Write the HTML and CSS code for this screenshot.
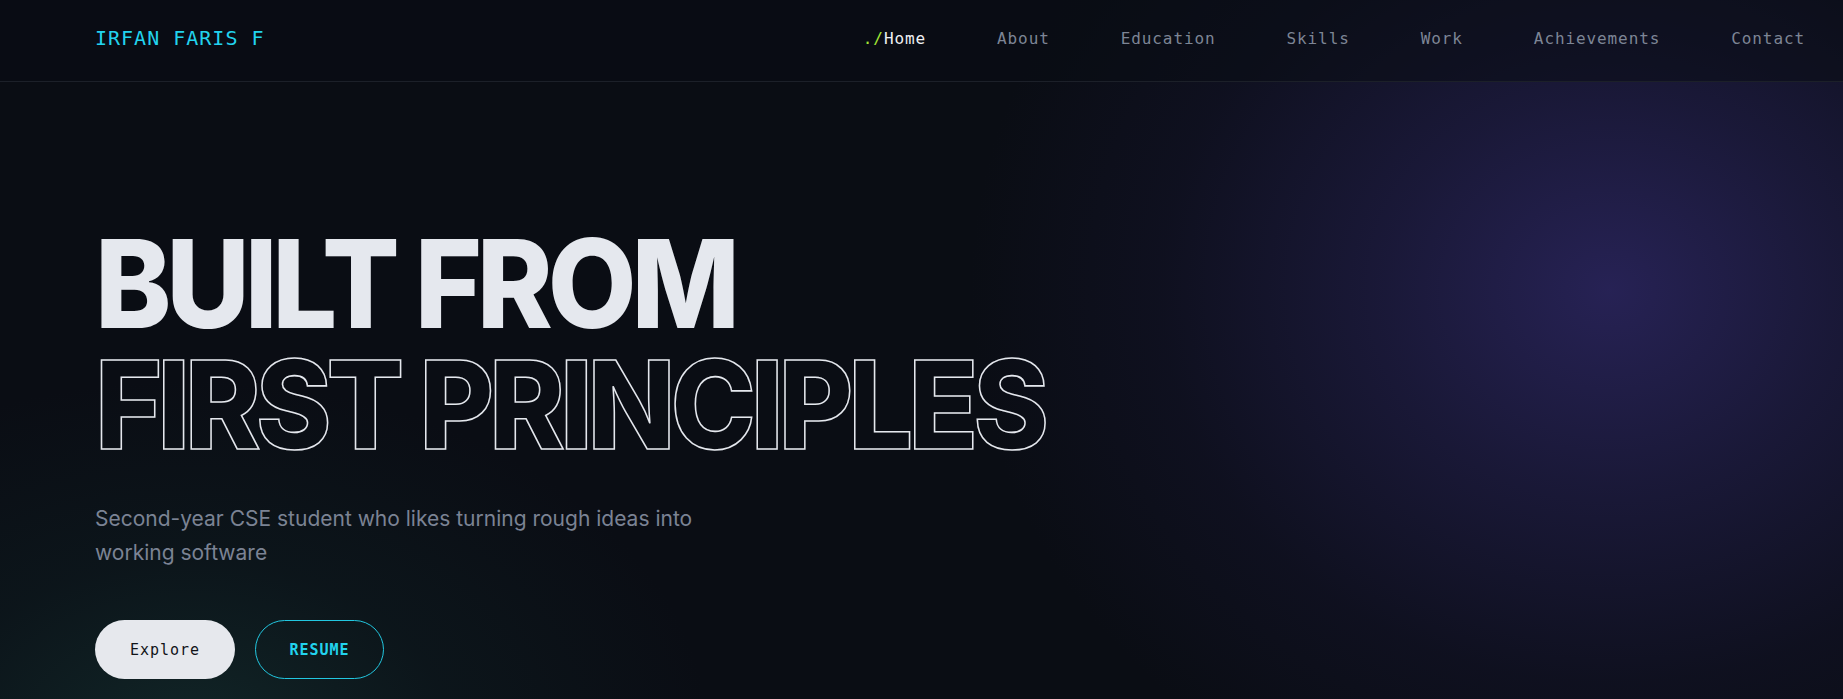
FILE: index.html
```html
<!DOCTYPE html>
<html lang="en">
<head>
<meta charset="utf-8">
<title>Irfan Faris F</title>
<link rel="stylesheet" href="styles.css">
</head>
<body>
<div class="page">
  <header class="nav">
    <a class="logo" href="#">IRFAN FARIS F</a>
    <nav class="links">
      <a class="link active" href="#"><span class="prefix">./</span>Home</a>
      <a class="link" href="#">About</a>
      <a class="link" href="#">Education</a>
      <a class="link" href="#">Skills</a>
      <a class="link" href="#">Work</a>
      <a class="link" href="#">Achievements</a>
      <a class="link" href="#">Contact</a>
    </nav>
  </header>
  <main class="hero">
    <h1 class="headline">
      <span class="solid">BUILT FROM</span>
      <span class="outline">FIRST PRINCIPLES</span>
    </h1>
    <p class="lead">Second-year CSE student who likes turning rough ideas into working software</p>
    <div class="actions">
      <a class="btn btn-primary" href="#">Explore</a>
      <a class="btn btn-ghost" href="#">RESUME</a>
    </div>
  </main>
</div>
</body>
</html>
```
FILE: styles.css
```css
* { box-sizing: border-box; }
html, body { margin: 0; padding: 0; }
body {
  background: #0a0d14;
  color: #e5e7eb;
  font-family: "Inter", "Noto Sans", sans-serif;
  overflow: hidden;
}
a { text-decoration: none; color: inherit; }

.page {
  min-height: 699px;
  background:
    radial-gradient(ellipse 640px 560px at 1610px 290px, rgba(40, 35, 88, 0.95) 0%, rgba(32, 29, 70, 0.72) 35%, rgba(22, 21, 48, 0.4) 70%, rgba(10, 13, 20, 0) 100%),
    radial-gradient(ellipse 520px 360px at 190px 740px, rgba(22, 54, 52, 0.6) 0%, rgba(16, 38, 40, 0.32) 50%, rgba(10, 13, 20, 0) 100%),
    #0a0d14;
}

.nav {
  height: 82px;
  display: flex;
  align-items: center;
  justify-content: space-between;
  padding: 0 38px 5px 95px;
  border-bottom: 1px solid #1c2029;
  background: rgba(10, 13, 20, 0.55);
}
.logo {
  font-family: "DejaVu Sans Mono", "Liberation Mono", monospace;
  font-size: 20px;
  letter-spacing: 1px;
  color: #22d3ee;
  font-weight: 500;
}
.links {
  display: flex;
  gap: 71px;
}
.link {
  font-family: "DejaVu Sans Mono", "Liberation Mono", monospace;
  font-size: 16px;
  letter-spacing: 0.9px;
  color: #7d8595;
}
.link.active { color: #eef0f3; }
.prefix { color: #a3e635; }

.hero {
  padding: 141px 95px 0;
}
.headline {
  margin: 0;
  font-family: "Inter", "Noto Sans", sans-serif;
  font-weight: 800;
  font-size: 123px;
  line-height: 121px;
  letter-spacing: -0.045em;
}
.headline span {
  display: block;
  transform: scaleX(0.935);
  transform-origin: left center;
}
.solid { color: #e5e8ee; }
.outline {
  color: transparent;
  -webkit-text-stroke: 1.6px #e5e8ee;
}
.lead {
  margin: 37px 0 0;
  max-width: 650px;
  font-size: 21px;
  line-height: 34px;
  color: #7b8394;
}
.actions {
  display: flex;
  gap: 20px;
  margin-top: 50px;
}
.btn {
  height: 59px;
  display: inline-flex;
  align-items: center;
  justify-content: center;
  border-radius: 30px;
  font-family: "DejaVu Sans Mono", "Liberation Mono", monospace;
  font-size: 15px;
  letter-spacing: 1px;
}
.btn-primary {
  width: 140px;
  background: #e6e8ed;
  color: #111318;
}
.btn-ghost {
  width: 129px;
  border: 1px solid #22c7e0;
  color: #22d3ee;
  font-weight: 700;
}
```
